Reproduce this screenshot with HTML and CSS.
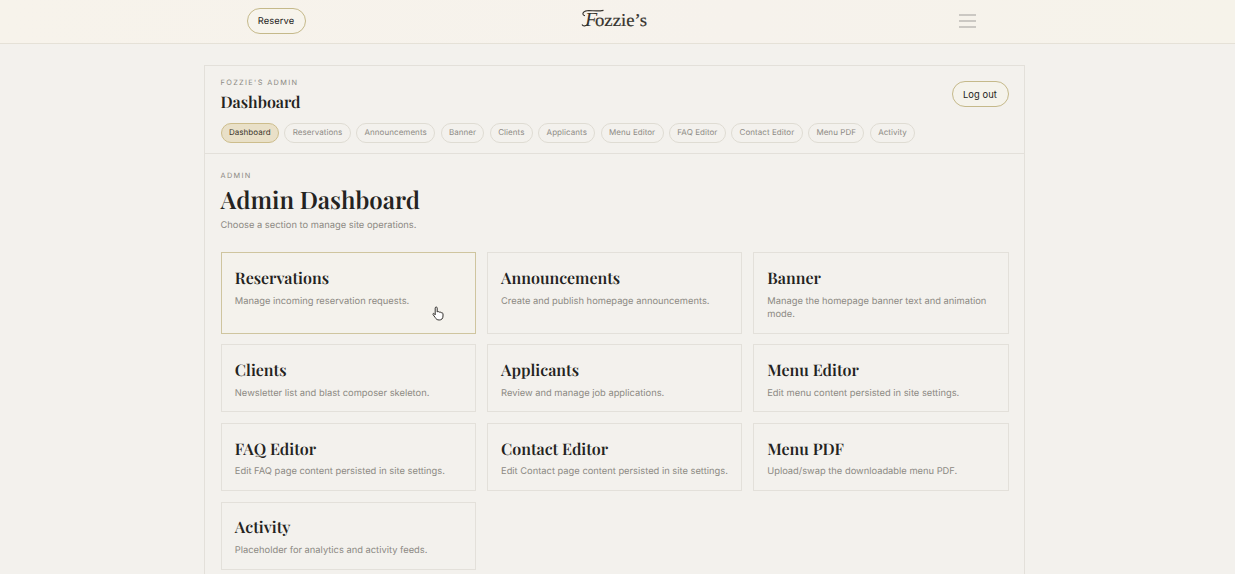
FILE: index.html
```
<!DOCTYPE html>
<html lang="en">
<head>
  <meta charset="UTF-8">
  <meta name="viewport" content="width=device-width, initial-scale=1">
  <title>Fozzie's Admin</title>
  <link rel="stylesheet" href="styles.css">
</head>
<body>
  <header class="topbar">
    <div class="topbar-left"><a class="btn" href="#">Reserve</a></div>
    <a class="logo" href="#" aria-label="Fozzie's">
      <svg width="68" height="26" viewBox="0 0 68 26">
        <path class="swash" d="M4 9.6C.6 9.3 1.4 5.1 6 4.7C11 4.3 15 5.7 22.5 4.4M1 18.6C2 20.8 5.6 20.2 7 17.5"/>
        <text class="logo-f" x="4" y="20">F</text>
        <text class="logo-rest" x="14" y="20" textLength="52" lengthAdjust="spacingAndGlyphs">ozzie’s</text>
      </svg>
    </a>
    <div class="topbar-right">
      <button class="menu" aria-label="Menu"><span></span><span></span><span></span></button>
    </div>
  </header>

  <main class="panel">
    <div class="panel-head">
      <div class="panel-title">
        <div>
          <p class="eyebrow">FOZZIE'S ADMIN</p>
          <h2>Dashboard</h2>
        </div>
        <button class="btn logout">Log out</button>
      </div>
      <nav class="pills">
        <a class="pill active" href="#">Dashboard</a>
        <a class="pill" href="#">Reservations</a>
        <a class="pill" href="#">Announcements</a>
        <a class="pill" href="#">Banner</a>
        <a class="pill" href="#">Clients</a>
        <a class="pill" href="#">Applicants</a>
        <a class="pill" href="#">Menu Editor</a>
        <a class="pill" href="#">FAQ Editor</a>
        <a class="pill" href="#">Contact Editor</a>
        <a class="pill" href="#">Menu PDF</a>
        <a class="pill" href="#">Activity</a>
      </nav>
    </div>

    <section class="content">
      <p class="eyebrow">ADMIN</p>
      <h1>Admin Dashboard</h1>
      <p class="lead">Choose a section to manage site operations.</p>

      <div class="cards">
        <a class="card selected" href="#">
          <h3>Reservations</h3>
          <p>Manage incoming reservation requests.</p>
          <svg class="pointer" width="12" height="15" viewBox="0 0 12 15">
            <path d="M3.2 8.8V2.1C3.2.6 5.2.6 5.2 2.1V6C5.6 5.3 7 5.4 7.2 6.3C7.8 5.7 8.9 5.9 9.1 6.9C9.9 6.4 11 6.9 11 8V10C11 12.7 9.5 14 7.2 14C5.1 14 4.1 13.1 3.2 11.5L1.1 8.7C.5 7.6 1.6 6.9 2.4 7.8Z"/>
          </svg>
        </a>
        <a class="card" href="#">
          <h3>Announcements</h3>
          <p>Create and publish homepage announcements.</p>
        </a>
        <a class="card" href="#">
          <h3>Banner</h3>
          <p>Manage the homepage banner text and animation mode.</p>
        </a>
        <a class="card" href="#">
          <h3>Clients</h3>
          <p>Newsletter list and blast composer skeleton.</p>
        </a>
        <a class="card" href="#">
          <h3>Applicants</h3>
          <p>Review and manage job applications.</p>
        </a>
        <a class="card" href="#">
          <h3>Menu Editor</h3>
          <p>Edit menu content persisted in site settings.</p>
        </a>
        <a class="card" href="#">
          <h3>FAQ Editor</h3>
          <p>Edit FAQ page content persisted in site settings.</p>
        </a>
        <a class="card" href="#">
          <h3>Contact Editor</h3>
          <p>Edit Contact page content persisted in site settings.</p>
        </a>
        <a class="card" href="#">
          <h3>Menu PDF</h3>
          <p>Upload/swap the downloadable menu PDF.</p>
        </a>
        <a class="card" href="#">
          <h3>Activity</h3>
          <p>Placeholder for analytics and activity feeds.</p>
        </a>
      </div>
    </section>
  </main>
</body>
</html>
```

FILE: styles.css
```
* { box-sizing: border-box; }

body {
  margin: 0;
  height: 574px;
  overflow: hidden;
  background: #f3f1ed;
  color: #242321;
  font-family: Inter, "Liberation Sans", sans-serif;
  text-rendering: geometricPrecision;
}

h1, h2, h3, p { margin: 0; }
a { color: inherit; text-decoration: none; }

h1, h2, h3 {
  font-family: "Playfair Display", "Liberation Serif", serif;
  font-weight: 600;
}

/* top bar */
.topbar {
  display: grid;
  grid-template-columns: 1fr 68px 1fr;
  align-items: center;
  height: 44px;
  padding: 0 259px 2px 246.5px;
  border-bottom: 1px solid #e5e1d7;
  background: linear-gradient(90deg, #f7f3eb, #f6f2ec 60%, #f6f3ea);
}

.topbar-right { display: flex; justify-content: flex-end; }
.logo { height: 26px; margin: -3px -4px 0 4px; }
.logo svg { display: block; overflow: visible; }
.logo-f { font: italic 20px "Liberation Serif", serif; fill: #35322d; }
.logo-rest { font: 18px "Liberation Serif", serif; fill: #35322d; stroke: #35322d; stroke-width: .2; }
.swash { fill: none; stroke: #35322d; stroke-width: 1.1; }

.btn {
  display: inline-flex;
  align-items: center;
  justify-content: center;
  width: 59px;
  height: 26px;
  padding: 1px 0 0;
  border: 1px solid #c5b98a;
  border-radius: 13px;
  background: #f7f4ec;
  color: #242321;
  font: 400 9.33px Inter, sans-serif;
  letter-spacing: .1px;
}

.btn.logout { width: 57px; margin-top: -2px; background: #f5f3eb; }

.menu {
  display: flex;
  flex-direction: column;
  gap: 4px;
  padding: 0;
  border: 0;
  background: none;
}

.menu span { width: 17px; height: 2px; background: #cbc8c3; }

/* admin panel */
.panel {
  width: 821px;
  height: 509px;
  margin: 21px 0 0 204px;
  border: 1px solid #e3e0da;
  border-bottom: 0;
}

.panel-head {
  height: 88px;
  padding: 12px 15.5px 0;
  border-bottom: 1px solid #e3e0da;
}

.panel-title {
  display: flex;
  justify-content: space-between;
  align-items: center;
  height: 33px;
}

.eyebrow {
  color: #8c8983;
  font-size: 7.33px;
  line-height: 10px;
  letter-spacing: 1.35px;
}

h2 {
  margin: 4px 0 -2px;
  font-size: 16px;
  line-height: 21px;
}

.pills {
  display: flex;
  gap: 5.33px;
  margin-top: 11.5px;
}

.pill {
  height: 20px;
  padding: 0 7.42px;
  border: 1px solid #dfdcd3;
  border-radius: 10px;
  color: #8e8b85;
  font-size: 8px;
  line-height: 17.5px;
  letter-spacing: .05px;
  white-space: nowrap;
}

.pill.active {
  border-color: #cdbd8c;
  background: #e9e0c8;
  color: #3a352b;
}

.content { padding: 17px 15.5px 0; }

h1 {
  margin-top: 4px;
  font-size: 24px;
  line-height: 30px;
}

.lead {
  margin-top: 4px;
  color: #8c8983;
  font-size: 9.33px;
  line-height: 13.33px;
}

.cards {
  display: grid;
  grid-template-columns: repeat(3, 1fr);
  gap: 10.67px;
  margin-top: 20.1px;
}

.card {
  position: relative;
  min-height: 68px;
  padding: 14.6px 13.33px 11.4px;
  border: 1px solid #e3e0da;
}

.card.selected { border-color: #cfc59f; background: #f4f2ec; }

.card h3 {
  margin-bottom: 4.7px;
  font-size: 16px;
  line-height: 22px;
}

.card p {
  color: #8c8983;
  font-size: 9.33px;
  line-height: 13.33px;
}

/* hand cursor over the hovered card */
.pointer {
  position: absolute;
  left: 210px;
  top: 53px;
  fill: #fff;
  stroke: #33312e;
  stroke-width: 1;
}
```
